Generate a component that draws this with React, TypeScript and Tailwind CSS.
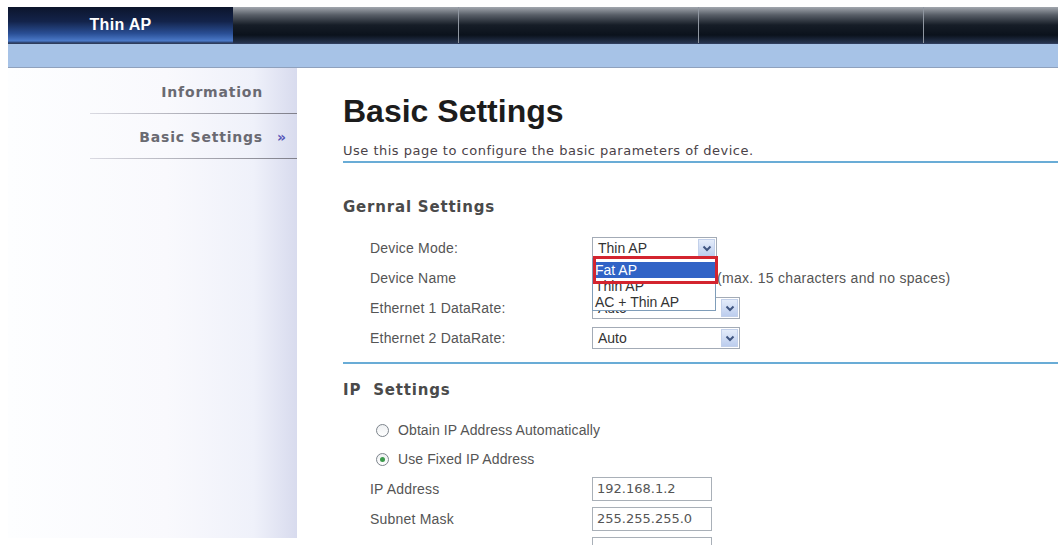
import React from 'react';

const Chevron = () => (
  <svg width="10" height="7" viewBox="0 0 10 7">
    <path d="M1.5 1.5 L5 5 L8.5 1.5" fill="none" stroke="#3f5580" strokeWidth="2" />
  </svg>
);

const Select = ({ value, width }: { value: string; width: string }) => (
  <div className={`${width} h-[22px] border border-[#a3abb6] bg-white flex items-center`}>
    <span className="flex-1 pl-[5px] text-[14px] text-[#333] leading-none">{value}</span>
    <span className="w-[17px] h-[18px] mr-[1px] flex items-center justify-center border border-[#c2d0ea] bg-[linear-gradient(to_bottom,#e4ecfa,#bccdee)]">
      <Chevron />
    </span>
  </div>
);

const Radio = ({ checked, label }: { checked?: boolean; label: string }) => (
  <div className="h-[29px] flex items-center pl-[33px]">
    <span className="w-[13px] h-[13px] rounded-full border border-[#7d848c] bg-[linear-gradient(to_bottom,#eef0f2,#ffffff)] flex items-center justify-center">
      {checked && <span className="w-[5px] h-[5px] rounded-full bg-[#3c9a4c]" />}
    </span>
    <span className="ml-[9px] text-[14px] tracking-[0.1px] text-[#555]">{label}</span>
  </div>
);

const Row = ({ label, children }: { label: string; children: React.ReactNode }) => (
  <div className="h-[30px] grid grid-cols-[249px_1fr] items-center">
    <span className="pl-[27px] text-[14px] tracking-[0.2px] text-[#555]">{label}</span>
    <div className="flex items-center">{children}</div>
  </div>
);

export default function App() {
  return (
    <div className="w-[1062px] h-[545px] overflow-hidden bg-white font-['Liberation_Sans',Arial,sans-serif]">
      <div className="pt-[7px] pl-[8px] pr-[4px]">
        {/* top nav */}
        <div className="h-[36px] flex bg-[linear-gradient(to_bottom,#a2a7ae_0%,#585e67_22%,#161d27_50%,#0b121c_78%,#26344f_100%)]">
          <div className="w-[225px] flex items-center justify-center bg-[linear-gradient(to_bottom,#0c152c_0%,#13234a_40%,#2a4f95_74%,#4b7ac9_94%,#27395f_100%)]">
            <span className="text-white font-bold text-[16px] tracking-[0.3px]">Thin AP</span>
          </div>
          <div className="w-[226px] border-r border-[#8f96a0]" />
          <div className="w-[240px] border-r border-[#8f96a0]" />
          <div className="w-[225px] border-r border-[#8f96a0]" />
          <div className="flex-1" />
        </div>
        <div className="h-[25px] bg-[#a7c3e7] border-t border-[#2f3d5c] border-b border-b-[#8fa1bd]" />

        <div className="flex">
          {/* sidebar */}
          <aside className="w-[289px] h-[470px] bg-[linear-gradient(to_right,#fdfeff_0%,#f9f9fd_55%,#eff1fa_85%,#d8dbee_100%)] font-['DejaVu_Sans',sans-serif] font-bold text-[14px] tracking-[0.8px] text-[#6a6a72]">
            <div className="h-[45px] pt-[3px] flex items-center justify-end pr-[34px]">Information</div>
            <div className="h-px ml-[82px] bg-[linear-gradient(to_right,#dadae2,#7f7f8a)]" />
            <div className="h-[44px] pt-[2px] flex items-center justify-end pr-[6px]">
              <span>Basic Settings</span>
              <span className="ml-[14px] w-[14px] text-[14px] text-[#5656b8]">&raquo;</span>
            </div>
            <div className="h-px ml-[82px] bg-[linear-gradient(to_right,#dadae2,#7f7f8a)]" />
          </aside>

          {/* main */}
          <main className="flex-1 ml-[46px] pt-[27px]">
            <h1 className="text-[32px] leading-[32px] font-bold text-[#1c1c1c]">Basic Settings</h1>
            <p className="mt-[16px] pb-[2px] border-b-2 border-[#69acd6] font-['DejaVu_Sans',sans-serif] text-[13px] tracking-[0.5px] leading-[16px] text-[#4a4248]">
              Use this page to configure the basic parameters of device.
            </p>

            <h2 className="mt-[34px] h-[20px] leading-[20px] font-['DejaVu_Sans',sans-serif] font-bold text-[15px] tracking-[0.8px] text-[#4a4a4a]">Gernral Settings</h2>

            <div className="mt-[16px] pb-[9px] border-b-2 border-[#69acd6]">
              <Row label="Device Mode:">
                <div className="relative">
                  <Select value="Thin AP" width="w-[125px]" />
                  <div className="absolute z-10 left-0 top-[21px] w-[124px] border border-[#7f9db9] bg-white pt-[3px] text-[14px] text-[#333] leading-none">
                    <div className="h-[16px] flex items-center pl-[2px] bg-[#3163c6] text-white">Fat AP</div>
                    <div className="h-[16px] flex items-center pl-[2px]">Thin AP</div>
                    <div className="h-[16px] flex items-center pl-[2px]">AC + Thin AP</div>
                  </div>
                  <div className="absolute z-20 left-[1px] top-[19px] w-[125px] h-[28px] border-[3px] border-[#d3242f]" />
                </div>
              </Row>
              <Row label="Device Name">
                <div className="w-[120px] h-[22px] border border-[#a3abb6] bg-white" />
                <span className="ml-[5px] text-[14px] tracking-[0.3px] text-[#555]">(max. 15 characters and no spaces)</span>
              </Row>
              <Row label="Ethernet 1 DataRate:">
                <Select value="Auto" width="w-[148px]" />
              </Row>
              <Row label="Ethernet 2 DataRate:">
                <Select value="Auto" width="w-[148px]" />
              </Row>
            </div>

            <h2 className="mt-[16px] h-[20px] leading-[20px] font-['DejaVu_Sans',sans-serif] font-bold text-[15px] tracking-[0.8px] text-[#4a4a4a]">IP&nbsp; Settings</h2>

            <div className="mt-[16px]">
              <Radio label="Obtain IP Address Automatically" />
              <Radio checked label="Use Fixed IP Address" />
              <Row label="IP Address">
                <div className="w-[120px] h-[24px] border border-[#a9b0b8] flex items-center pl-[4px] font-['DejaVu_Sans',sans-serif] text-[13px] text-[#555]">192.168.1.2</div>
              </Row>
              <Row label="Subnet Mask">
                <div className="w-[120px] h-[24px] border border-[#a9b0b8] flex items-center pl-[4px] font-['DejaVu_Sans',sans-serif] text-[13px] text-[#555]">255.255.255.0</div>
              </Row>
              <Row label="">
                <div className="w-[120px] h-[24px] border border-[#a9b0b8]" />
              </Row>
            </div>
          </main>
        </div>
      </div>
    </div>
  );
}
